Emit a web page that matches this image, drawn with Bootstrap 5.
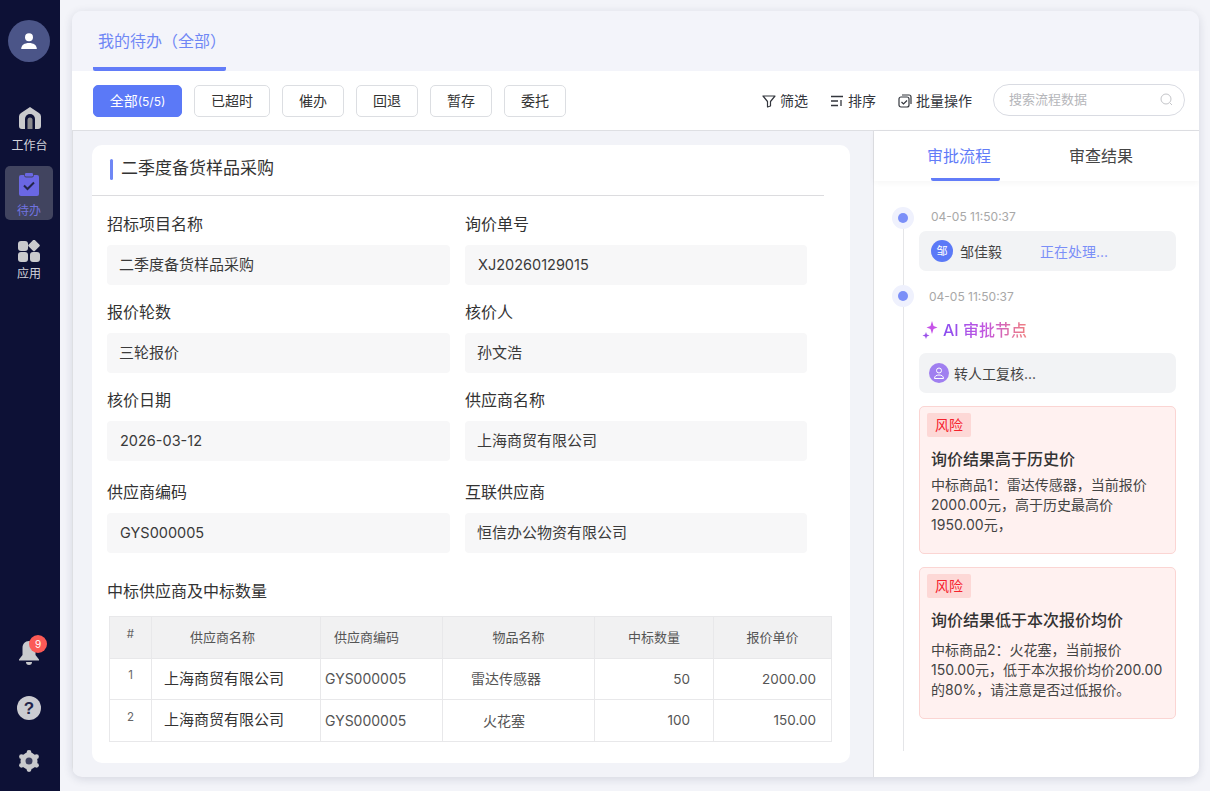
<!DOCTYPE html>
<html lang="zh-CN">
<head>
  <meta charset="UTF-8">
  <title>我的待办</title>
  <link href="https://cdn.jsdelivr.net/npm/bootstrap@5.3.0/dist/css/bootstrap.min.css" rel="stylesheet">
  <style>
    html, body { height: 791px; overflow: hidden; }
    body { font-family: Inter, "Noto Sans CJK SC", sans-serif; font-size: 14px; color: #333; background: #f3f4f9; }
    .side-rail { width: 60px; height: 791px; background: #0d1136; flex: none; padding-right: 2px; }
    .user-ava { width: 42px; height: 42px; border-radius: 50%; background: #4b5588; margin: 20px auto 0; }
    .rail-item { width: 48px; height: 54px; margin: 14px auto 0; border-radius: 5px; color: #d4d5dc; font-size: 12px; line-height: 14px; padding-top: 6px; }
    .rail-item svg { display: block; margin: 0 auto 8px; }
    .rail-item.on { background: #41445f; color: #7173e0; margin-top: 12px; }
    .rail-item.first { margin-top: 38px; padding-left: 1px; }
    .rail-item.first svg { margin-bottom: 9px; }
    .rail-item.apps svg { margin-bottom: 5px; }
    .rail-low { margin-top: auto; padding-bottom: 19px; gap: 30px; }
    .bell-wrap { width: 28px; }
    .bell-num { position: absolute; top: -5px; right: -4px; width: 18px; height: 18px; border-radius: 50%; background: #fb5a56; color: #fff; font-size: 10px; line-height: 18px; text-align: center; }
    .main-panel { margin: 11px 11px 14px 12px; border-radius: 10px; overflow: hidden; box-shadow: 0 2px 10px rgba(30,35,70,.14); background: #f2f3f8; }
    .top-head { height: 60px; padding-left: 21px; background: #f3f4fa; }
    .top-tab { width: 133px; height: 60px; color: #6f87f5; font-size: 16px; padding: 20px 0 0 5px; border-bottom: 4px solid #627cf8; border-radius: 0 0 2px 2px; line-height: 21px; white-space: nowrap; }
    .tool-row { height: 60px; background: #fff; padding: 0 14px 0 21px; border-bottom: 1px solid #dedfe3; }
    .flt-row { gap: 12px; }
    .flt-btn { width: 62px; height: 32px; border: 1px solid #dcdee2; border-radius: 5px; background: #fff; color: #333; font-size: 14px; line-height: 29px; text-align: center; }
    .flt-btn.wide { width: 76px; }
    .flt-btn.on { width: 89px; background: #5b79f7; border-color: #5b79f7; color: #fff; }
    .flt-btn.on span { font-size: 12px; }
    .tool-group { gap: 22px; }
    .tool-link { font-size: 14px; color: #33363d; gap: 4px; }
    .find-box { width: 192px; height: 32px; border: 1px solid #d9dbe2; border-radius: 16px; color: #b5b6ba; font-size: 13px; padding: 0 11px 0 15px; margin: 0 0 2px 21px; }
    .body-row { height: 646px; }
    .left-pane { width: 801px; padding: 14px 23px 14px 19px; border-left: 1px solid #dedfe3; }
    .form-card { width: 758px; height: 618px; background: #fff; border-radius: 10px; }
    .card-head { width: 732px; height: 51px; border-bottom: 1px solid #dcdcdf; padding: 0 0 2px 18px; font-size: 17px; color: #333; gap: 8px; }
    .card-head i { display: block; width: 3px; height: 21px; background: #6f87f5; border-radius: 2px; }
    .fld-grid { display: grid; grid-template-columns: 343px 342px; column-gap: 15px; padding: 1px 0 0 15px; }
    .fld-lab { height: 48px; padding-top: 16px; line-height: 22px; font-size: 16px; color: #333; }
    .fld-val { height: 40px; background: #f7f7f8; border-radius: 4px; padding: 0 12px; line-height: 40px; font-size: 15px; color: #3a3a3a; }
    .fld-val.lat-val { font-size: 14.500px; padding-left: 13px; }
    .gap-row .fld-lab { height: 52px; padding-top: 20px; }
    .sub-title { margin: 27px 0 0 15px; font-size: 16px; line-height: 22px; color: #333; }
    .bid-table { width: 722px; margin: 14px 0 0 17px; table-layout: fixed; border-collapse: collapse; font-size: 15px; }
    .bid-table th, .bid-table td { height: 41.500px; border: 1px solid #e8e8ea; padding: 0; vertical-align: middle; }
    .bid-table th { background: #f1f1f2; font-size: 13px; font-weight: 400; color: #555; text-align: center; }
    .bid-table td { color: #333; }
    .bid-table .row-no { font-size: 11.500px; color: #666; text-align: center; padding-bottom: 6px; }
    .bid-table .name-cell { padding-left: 12px; }
    .bid-table .num-cell { text-align: right; font-size: 13.500px; color: #555; }
    .bid-table .pad-qty { padding-right: 23px; }
    .bid-table .pad-price { padding-right: 15px; }
    .bid-table .code-cell { padding-left: 4px; font-size: 14px; color: #555; }
    .bid-table .goods-cell { font-size: 14px; color: #555; }
    .bid-table th.h-left { text-align: left; }
    .right-pane { width: 326px; background: #fff; border-left: 1px solid #dedfe3; }
    .rev-tabs { height: 50px; box-shadow: 0 2px 6px rgba(0,0,0,.04); font-size: 16px; color: #444; }
    .rev-tab { width: 69px; margin-left: 57px; height: 50px; padding-top: 14px; line-height: 22px; white-space: nowrap; }
    .rev-tab + .rev-tab { margin-left: 69px; }
    .rev-tab.on { color: #627cf8; border-bottom: 3px solid #627cf8; border-radius: 0 0 2px 2px; text-indent: -4px; }
    .flow-wrap { padding: 0 23px 0 45px; height: 596px; }
    .flow-line { position: absolute; left: 29px; top: 40px; width: 1px; height: 530px; background: #e4e5e8; }
    .flow-dot { position: absolute; left: -27px; width: 22px; height: 22px; border-radius: 50%; background: #eff1fd; }
    .flow-dot::after { content: ""; position: absolute; left: 6px; top: 6px; width: 10px; height: 10px; border-radius: 50%; background: #7b8ff8; }
    .flow-time { font-size: 12px; line-height: 16px; color: #a8a8a8; }
    .flow-box { height: 40px; background: #f2f3f5; border-radius: 7px; padding-left: 12px; font-size: 14px; color: #444; }
    .mini-ava { width: 22px; height: 22px; border-radius: 50%; background: #5b79f7; color: #fff; font-size: 11px; line-height: 22px; text-align: center; margin-right: 7px; }
    .mini-ava.purple { width: 20px; height: 20px; background: #a07ff0; margin-right: 5px; line-height: 18px; }
    .busy-text { margin-left: 38px; color: #7b8ff8; }
    .ai-title { font-size: 16px; font-weight: 500; line-height: 22px; background: linear-gradient(90deg, #8a4df0, #c256e0 50%, #f07f7f); -webkit-background-clip: text; background-clip: text; color: transparent; }
    .risk-card { background: #fff1f0; border: 1px solid #fbd5d3; border-radius: 5px; padding: 6px 8px 0 7px; }
    .risk-tag { display: inline-block; width: 44px; height: 24px; background: #fdd8d6; color: #f5222d; border-radius: 2px; font-size: 14px; line-height: 24px; text-align: center; }
    .risk-title { margin: 11px 0 0 4px; font-size: 16px; font-weight: 500; line-height: 22px; color: #333; }
    .risk-text { margin: 5px 0 0 4px; font-size: 14px; line-height: 20px; color: #444; white-space: nowrap; }
    .risk-card.low .risk-text { margin-top: 9px; }
  </style>
</head>
<body>
  <div class="d-flex">
    <nav class="side-rail d-flex flex-column text-center">
      <div class="user-ava d-flex align-items-center justify-content-center">
        <svg width="18" height="18" viewBox="0 0 18 18" fill="#fff"><circle cx="9" cy="5.200" r="4"/><path d="M1.200 17c0-4 3.400-6 7.800-6s7.800 2 7.800 6z"/></svg>
      </div>
      <div class="rail-item first">
        <svg width="24" height="24" viewBox="0 0 24 24"><path d="M12 1 3 7q-2 1.300-2 3.500V20q0 3 3 3h16q3 0 3-3v-9.500Q23 8.300 21 7z" fill="#c9cacd"/><path d="M7 23V13a5 5 0 0 1 10 0v10z" fill="#0d1136"/><path d="M9.500 23V14a2.500 2.500 0 0 1 5 0v9z" fill="#8a8a8e"/></svg>
        工作台
      </div>
      <div class="rail-item on">
        <svg width="22" height="24" viewBox="0 0 22 24"><rect x="1" y="3" width="20" height="21" rx="2" fill="#6a67e3"/><rect x="6.500" y="0.500" width="9" height="4.500" rx="1.500" fill="#6a67e3" stroke="#41445f"/><path d="M6 13.500l3.500 3.500 6.500-6.500" fill="none" stroke="#23264a" stroke-width="2"/></svg>
        待办
      </div>
      <div class="rail-item apps">
        <svg width="22" height="22" viewBox="0 0 22 22" fill="#c9cacd"><rect x="0" y="1" width="10" height="10" rx="3"/><rect x="11.500" y="1" width="9" height="9" rx="1.500" transform="rotate(45 16 5.500)"/><rect x="0" y="12" width="10" height="10" rx="3"/><rect x="12" y="12" width="10" height="10" rx="3"/></svg>
        应用
      </div>
      <div class="rail-low d-flex flex-column align-items-center">
        <div class="bell-wrap position-relative">
          <svg width="22" height="26" viewBox="0 0 22 26" class="d-block mx-auto" fill="#c9cacd"><path d="M11 1c-4 0-6.500 3-6.500 7v7L1 19.500v1h20v-1L17.500 15V8c0-4-2.500-7-6.500-7z"/><path d="M8 22h6a3 3 0 0 1-6 0z"/></svg>
          <span class="bell-num">9</span>
        </div>
        <svg width="24" height="24" viewBox="0 0 24 24"><circle cx="12" cy="12" r="12" fill="#cbccd1"/><text x="12" y="18" text-anchor="middle" font-size="17" font-weight="700" font-family="Liberation Sans, sans-serif" fill="#23264a">?</text></svg>
        <svg width="22" height="22" viewBox="0 0 22 22"><circle cx="11" cy="11" r="5.500" fill="none" stroke="#c9cacd" stroke-width="6"/><g fill="#c9cacd"><circle cx="11" cy="2.400" r="2.400"/><circle cx="11" cy="19.600" r="2.400"/><circle cx="3.500" cy="6.700" r="2.400"/><circle cx="18.500" cy="6.700" r="2.400"/><circle cx="3.500" cy="15.300" r="2.400"/><circle cx="18.500" cy="15.300" r="2.400"/></g><circle cx="11" cy="11" r="3.500" fill="#3c3f5e"/></svg>
      </div>
    </nav>

    <main class="main-panel flex-grow-1">
      <div class="top-head"><div class="top-tab">我的待办（全部）</div></div>
      <div class="tool-row d-flex align-items-center">
        <div class="d-flex flt-row align-items-center">
          <div class="flt-btn on">全部<span>(5/5)</span></div>
          <div class="flt-btn wide">已超时</div>
          <div class="flt-btn">催办</div>
          <div class="flt-btn">回退</div>
          <div class="flt-btn">暂存</div>
          <div class="flt-btn">委托</div>
        </div>
        <div class="ms-auto d-flex align-items-center tool-group">
          <span class="tool-link d-flex align-items-center">
            <svg width="14" height="14" viewBox="0 0 14 14" fill="none" stroke="#33363d" stroke-width="1.200"><path d="M1 2h12L8.500 7.500V12L5.500 13V7.500z" stroke-linejoin="round"/></svg>筛选
          </span>
          <span class="tool-link d-flex align-items-center">
            <svg width="14" height="14" viewBox="0 0 14 14" fill="none" stroke="#33363d" stroke-width="1.300"><path d="M1 2.500h12M1 7h7M1 11.500h7M11 6v6"/></svg>排序
          </span>
          <span class="tool-link d-flex align-items-center">
            <svg width="14" height="14" viewBox="0 0 14 14" fill="none" stroke="#33363d" stroke-width="1.200"><rect x="1" y="3" width="10" height="10" rx="2"/><path d="M4 1h7a2 2 0 0 1 2 2v7M3.500 8l2 2 3.500-3.500"/></svg>批量操作
          </span>
        </div>
        <div class="find-box d-flex align-items-center justify-content-between">
          搜索流程数据
          <svg width="13" height="13" viewBox="0 0 13 13" fill="none" stroke="#c4c5c9" stroke-width="1"><circle cx="6" cy="6" r="5"/><path d="M10 10l2 2"/></svg>
        </div>
      </div>

      <div class="body-row d-flex">
        <section class="left-pane">
          <div class="form-card">
            <div class="card-head d-flex align-items-center"><i></i>二季度备货样品采购</div>
            <div class="fld-grid">
              <div><div class="fld-lab">招标项目名称</div><div class="fld-val">二季度备货样品采购</div></div>
              <div><div class="fld-lab">询价单号</div><div class="fld-val lat-val">XJ20260129015</div></div>
              <div><div class="fld-lab">报价轮数</div><div class="fld-val">三轮报价</div></div>
              <div><div class="fld-lab">核价人</div><div class="fld-val">孙文浩</div></div>
              <div><div class="fld-lab">核价日期</div><div class="fld-val lat-val">2026-03-12</div></div>
              <div><div class="fld-lab">供应商名称</div><div class="fld-val">上海商贸有限公司</div></div>
              <div class="gap-row"><div class="fld-lab">供应商编码</div><div class="fld-val lat-val">GYS000005</div></div>
              <div class="gap-row"><div class="fld-lab">互联供应商</div><div class="fld-val">恒信办公物资有限公司</div></div>
            </div>
            <div class="sub-title">中标供应商及中标数量</div>
            <table class="bid-table">
              <colgroup><col style="width:42px"><col style="width:169px"><col style="width:122px"><col style="width:152px"><col style="width:119px"><col style="width:118px"></colgroup>
              <thead>
                <tr>
                  <th class="row-no">#</th>
                  <th class="h-left" style="padding-left:38px">供应商名称</th>
                  <th class="h-left" style="padding-left:13px">供应商编码</th>
                  <th>物品名称</th><th>中标数量</th><th>报价单价</th>
                </tr>
              </thead>
              <tbody>
                <tr><td class="row-no">1</td><td class="name-cell">上海商贸有限公司</td><td class="code-cell">GYS000005</td><td class="goods-cell" style="padding-left:28px">雷达传感器</td><td class="num-cell pad-qty">50</td><td class="num-cell pad-price">2000.00</td></tr>
                <tr><td class="row-no">2</td><td class="name-cell">上海商贸有限公司</td><td class="code-cell">GYS000005</td><td class="goods-cell" style="padding-left:40px">火花塞</td><td class="num-cell pad-qty">100</td><td class="num-cell pad-price">150.00</td></tr>
              </tbody>
            </table>
          </div>
        </section>

        <aside class="right-pane">
          <div class="rev-tabs d-flex">
            <div class="rev-tab on">审批流程</div>
            <div class="rev-tab">审查结果</div>
          </div>
          <div class="flow-wrap position-relative">
            <div class="flow-line"></div>
            <div class="position-relative">
              <span class="flow-dot" style="top:26px"></span>
              <div class="flow-time" style="padding:28px 0 0 12px">04-05 11:50:37</div>
              <div class="flow-box d-flex align-items-center" style="margin-top:6px"><span class="mini-ava">邹</span>邹佳毅<span class="busy-text">正在处理...</span></div>
            </div>
            <div class="position-relative">
              <span class="flow-dot" style="top:14px"></span>
              <div class="flow-time" style="padding:18px 0 0 10px">04-05 11:50:37</div>
              <div class="d-flex align-items-center" style="margin:14px 0 0 3px;gap:5px">
                <svg width="16" height="20" viewBox="0 0 16 20"><path d="M10 1l1.500 5 4 1.500-4 1.500L10 14 8.500 9l-4-1.500 4-1.500z" fill="#c653e8"/><path d="M4 12l.9 2.600L7.500 15.500l-2.600.9L4 19l-.9-2.600L.5 15.500l2.600-.9z" fill="#9a52ea"/></svg>
                <span class="ai-title">AI 审批节点</span>
              </div>
              <div class="flow-box d-flex align-items-center" style="margin-top:12px;padding-left:10px">
                <span class="mini-ava purple">
                  <svg width="12" height="12" viewBox="0 0 12 12" fill="none" stroke="#fff"><circle cx="6" cy="3.500" r="2.500"/><path d="M1.500 11.500c0-2.500 2-3.500 4.500-3.500s4.500 1 4.500 3.500z"/></svg>
                </span>转人工复核...
              </div>
              <div class="risk-card" style="height:148px;margin-top:13px">
                <span class="risk-tag">风险</span>
                <div class="risk-title">询价结果高于历史价</div>
                <div class="risk-text">中标商品1：雷达传感器，当前报价<br>2000.00元，高于历史最高价<br>1950.00元，</div>
              </div>
              <div class="risk-card low" style="height:152px;margin-top:13px">
                <span class="risk-tag">风险</span>
                <div class="risk-title">询价结果低于本次报价均价</div>
                <div class="risk-text">中标商品2：火花塞，当前报价<br>150.00元，低于本次报价均价200.00<br>的80%，请注意是否过低报价。</div>
              </div>
            </div>
          </div>
        </aside>
      </div>
    </main>
  </div>
  <script src="https://cdn.jsdelivr.net/npm/bootstrap@5.3.0/dist/js/bootstrap.bundle.min.js"></script>
</body>
</html>
